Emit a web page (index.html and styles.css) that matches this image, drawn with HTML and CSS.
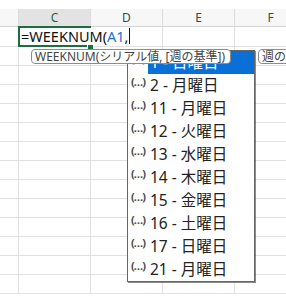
FILE: index.html
```html
<!DOCTYPE html>
<html lang="ja">
  <head>
    <meta charset="UTF-8" />
    <title>WEEKNUM</title>
    <link rel="stylesheet" href="styles.css">
  </head>
  <body>
    <div class="sheet">
      <div class="strip"></div>

      <!-- column headers -->
      <div class="row head">
        <div class="cell"></div>
        <div class="cell on">C</div>
        <div class="cell">D</div>
        <div class="cell">E</div>
        <div class="cell">F</div>
      </div>

      <div class="row tall">
        <div class="cell"></div><div class="cell"></div><div class="cell"></div><div class="cell"></div><div class="cell"></div>
      </div>
      <div class="row"><div class="cell"></div><div class="cell"></div><div class="cell"></div><div class="cell"></div><div class="cell"></div></div>
      <div class="row"><div class="cell"></div><div class="cell"></div><div class="cell"></div><div class="cell"></div><div class="cell"></div></div>
      <div class="row"><div class="cell"></div><div class="cell"></div><div class="cell"></div><div class="cell"></div><div class="cell"></div></div>
      <div class="row"><div class="cell"></div><div class="cell"></div><div class="cell"></div><div class="cell"></div><div class="cell"></div></div>
      <div class="row"><div class="cell"></div><div class="cell"></div><div class="cell"></div><div class="cell"></div><div class="cell"></div></div>
      <div class="row"><div class="cell"></div><div class="cell"></div><div class="cell"></div><div class="cell"></div><div class="cell"></div></div>
      <div class="row"><div class="cell"></div><div class="cell"></div><div class="cell"></div><div class="cell"></div><div class="cell"></div></div>
      <div class="row"><div class="cell"></div><div class="cell"></div><div class="cell"></div><div class="cell"></div><div class="cell"></div></div>
      <div class="row"><div class="cell"></div><div class="cell"></div><div class="cell"></div><div class="cell"></div><div class="cell"></div></div>
      <div class="row"><div class="cell"></div><div class="cell"></div><div class="cell"></div><div class="cell"></div><div class="cell"></div></div>
      <div class="row"><div class="cell"></div><div class="cell"></div><div class="cell"></div><div class="cell"></div><div class="cell"></div></div>
      <div class="row"><div class="cell"></div><div class="cell"></div><div class="cell"></div><div class="cell"></div><div class="cell"></div></div>
      <div class="row"><div class="cell"></div><div class="cell"></div><div class="cell"></div><div class="cell"></div><div class="cell"></div></div>
    </div>

    <!-- active cell in edit mode -->
    <div class="active"></div>
    <div class="editor">=WEEKNUM(<span class="ref">A1</span>,<span class="caret"></span></div>
    <div class="handle"></div>

    <!-- argument tooltips -->
    <div class="tip">WEEKNUM(シリアル値, [週の基準])</div>
    <div class="tip tip-more">週の基準</div>

    <!-- autocomplete list -->
    <ul class="list">
      <li class="item sel"><span class="ico">(…)</span><span class="label">1 - 日曜日</span></li>
      <li class="item"><span class="ico">(…)</span><span class="label">2 - 月曜日</span></li>
      <li class="item"><span class="ico">(…)</span><span class="label">11 - 月曜日</span></li>
      <li class="item"><span class="ico">(…)</span><span class="label">12 - 火曜日</span></li>
      <li class="item"><span class="ico">(…)</span><span class="label">13 - 水曜日</span></li>
      <li class="item"><span class="ico">(…)</span><span class="label">14 - 木曜日</span></li>
      <li class="item"><span class="ico">(…)</span><span class="label">15 - 金曜日</span></li>
      <li class="item"><span class="ico">(…)</span><span class="label">16 - 土曜日</span></li>
      <li class="item"><span class="ico">(…)</span><span class="label">17 - 日曜日</span></li>
      <li class="item"><span class="ico">(…)</span><span class="label">21 - 月曜日</span></li>
    </ul>
  </body>
</html>
```

FILE: styles.css
```css
body {
  margin: 0;
  width: 286px;
  height: 304px;
  overflow: hidden;
  position: relative;
  background: #fff;
  font-family: "Noto Sans", "Noto Sans CJK JP", sans-serif;
  color: #222;
}

.sheet {
  width: 286px;
}

.strip {
  height: 9px;
}

.row {
  display: grid;
  grid-template-columns: 19px 72px 72px 72px 72px;
  height: 19px;
}

.row.tall {
  height: 20px;
}

.cell {
  box-sizing: border-box;
  border-right: 1px solid #e1e1e1;
  border-bottom: 1px solid #e1e1e1;
}

.head {
  height: 18px;
}

.head .cell {
  background: #f7f7f7;
  border-bottom-color: #d4d4d4;
  border-right-color: #dcdcdc;
  font-size: 12px;
  line-height: 17px;
  text-align: center;
  color: #444;
}

.head .cell.on {
  background: #e3e3e3;
  color: #2b5e3c;
}

/* selected cell */
.active {
  position: absolute;
  left: 18px;
  top: 26px;
  width: 69px;
  height: 17px;
  border: 2px solid #1e6c41;
}

.handle {
  position: absolute;
  left: 87px;
  top: 44px;
  width: 5px;
  height: 5px;
  background: #1e6c41;
  border: 1px solid #fff;
}

.editor {
  position: absolute;
  left: 20px;
  top: 28px;
  width: 109px;
  height: 17px;
  background: #fff;
  font-size: 14.5px;
  line-height: 17px;
  padding-left: 1px;
  box-sizing: border-box;
  color: #111;
  white-space: nowrap;
}

.ref {
  color: #1f6fc6;
}

.caret {
  display: inline-block;
  width: 1px;
  height: 16px;
  background: #111;
  vertical-align: top;
  margin-left: 1px;
}

/* function tooltip */
.tip {
  position: absolute;
  left: 31px;
  top: 49px;
  width: 200px;
  height: 15px;
  box-sizing: border-box;
  background: #fff;
  border: 1px solid #8c8c8c;
  border-radius: 4px;
  font-size: 12px;
  line-height: 13px;
  padding-left: 3px;
  color: #444;
  white-space: nowrap;
  z-index: 2;
}

.tip-more {
  left: 258px;
  width: 60px;
}

/* autocomplete list */
.list {
  position: absolute;
  left: 127px;
  top: 50px;
  width: 128px;
  margin: 0;
  padding: 0;
  list-style: none;
  box-sizing: border-box;
  background: #fff;
  border: 1px solid #666;
  box-shadow: 1px 1px 0 rgba(0, 0, 0, 0.45);
  z-index: 1;
}

.item {
  display: flex;
  height: 23px;
}

.ico {
  width: 20px;
  padding-left: 3px;
  box-sizing: border-box;
  font-size: 11px;
  font-weight: bold;
  line-height: 16px;
  letter-spacing: -1px;
  color: #4a4a4a;
  white-space: nowrap;
}

.label {
  flex: 1;
  padding-left: 2px;
  font-size: 15.5px;
  line-height: 23px;
  white-space: nowrap;
}

.item.sel .label {
  background: #0a6fd6;
  color: #fff;
}
```
